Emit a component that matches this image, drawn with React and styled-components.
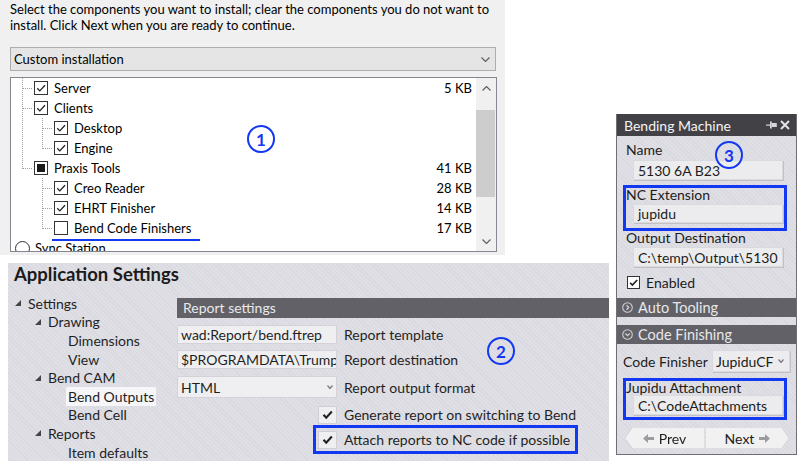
import React from 'react';
import styled, { createGlobalStyle } from 'styled-components';

const FONT = `Lato, "Open Sans", "Liberation Sans", sans-serif`;
const BLUE = '#1238f2';
const HATCH = 'repeating-linear-gradient(45deg, #dfdfe5 0 2px, #d8d8df 2px 3px)';

const GlobalStyle = createGlobalStyle`
  html, body { margin: 0; padding: 0; background: #fff; }
  body { font-family: ${FONT}; color: #000; overflow: hidden; }
  * { box-sizing: border-box; }
`;

const Page = styled.div`
  display: flex;
  align-items: flex-start;
  width: 803px;
  height: 461px;
  overflow: hidden;
`;

const LeftColumn = styled.div`
  display: flex;
  flex-direction: column;
  width: 609px;
  flex-shrink: 0;
`;

const Badge = styled.span`
  position: absolute;
  left: ${p => p.$x}px;
  top: ${p => p.$y}px;
  width: 28px;
  height: 28px;
  border: 2.5px solid ${BLUE};
  border-radius: 50%;
  display: flex;
  align-items: center;
  justify-content: center;
  color: ${BLUE};
  font: 700 17px ${FONT};
`;

/* ---------- installer ---------- */

const Installer = styled.section`
  width: 505px;
  height: 255px;
  background: #f0f0f0;
  padding: 1px 0 0 10px;
  font-size: 13px;
`;

const Intro = styled.p`
  margin: 0;
  line-height: 16px;
  white-space: nowrap;
`;

const Combo = styled.div`
  margin-top: 14px;
  width: 486px;
  height: 24px;
  border: 1px solid #adadad;
  background: #e5e5e5;
  display: flex;
  align-items: center;
  justify-content: space-between;
  padding: 0 5px 0 3px;
`;

const ListBox = styled.div`
  position: relative;
  margin-top: 6px;
  width: 487px;
  height: 175px;
  border: 1px solid #828790;
  background: #fff;
  display: flex;
  overflow: hidden;
`;

const TreeArea = styled.div`
  flex: 1;
  display: flex;
  flex-direction: column;
`;

const TreeRow = styled.div`
  height: 20px;
  flex-shrink: 0;
  display: flex;
  align-items: center;
`;

const Guide = styled.svg`
  display: block;
  flex-shrink: 0;
`;

const Box = styled.span`
  width: 14px;
  height: 14px;
  border: 1px solid #333;
  background: #fff;
  display: flex;
  align-items: center;
  justify-content: center;
  flex-shrink: 0;
  margin-right: 6px;
`;

const Mixed = styled.span`
  width: 8px;
  height: 8px;
  background: #1a1a1a;
`;

const Item = styled.span`
  position: relative;
  display: flex;
  align-items: center;
  white-space: nowrap;

  &::after {
    content: '';
    display: ${p => (p.$marked ? 'block' : 'none')};
    position: absolute;
    left: -2px;
    bottom: -5px;
    width: 148px;
    height: 2px;
    background: ${BLUE};
  }
`;

const Size = styled.span`
  margin-left: auto;
  padding-right: 4px;
  white-space: nowrap;
`;

const Radio = styled.span`
  width: 15px;
  height: 15px;
  border: 1px solid #333;
  border-radius: 50%;
  margin: 0 5px 0 4px;
  flex-shrink: 0;
`;

const ScrollBar = styled.div`
  width: 20px;
  background: #f0f0f0;
  display: flex;
  flex-direction: column;
`;

const ScrollArrow = styled.div`
  height: 20px;
  display: flex;
  align-items: center;
  justify-content: center;
`;

const ScrollTrack = styled.div`
  flex: 1;
  padding: 12px 1px 0 0;
`;

const Thumb = styled.div`
  height: 87px;
  background: #cdcdcd;
`;

/* ---------- application settings ---------- */

const SettingsPane = styled.section`
  position: relative;
  margin: 8px 0 0 8px;
  width: 601px;
  height: 198px;
  background: ${HATCH};
  color: #1f1f1f;
  overflow: hidden;
`;

const Heading = styled.h1`
  margin: 0;
  padding-left: 6px;
  font: 700 18.5px/22px ${FONT};
  color: #1b1b1b;
`;

const SettingsBody = styled.div`
  display: flex;
  margin-top: 9px;
`;

const NavTree = styled.div`
  width: 169px;
  flex-shrink: 0;
  display: flex;
  flex-direction: column;
  font-size: 14px;
`;

const NavItem = styled.div`
  height: 18.6px;
  display: flex;
  align-items: center;
  padding-left: ${p => 7 + p.$level * 20}px;
  white-space: nowrap;
`;

const Expander = styled.svg`
  display: block;
  width: 6px;
  height: 6px;
  margin-right: 7px;
  flex-shrink: 0;
`;

const Spacer = styled.span`
  width: 13px;
  flex-shrink: 0;
`;

const NavLabel = styled.span`
  padding: 0 2px;
  margin-left: -2px;
  line-height: 19px;
  background: ${p => (p.$active ? '#f6f6f8' : 'transparent')};
`;

const ReportColumn = styled.div`
  flex: 1;
  padding-top: 4px;
  display: flex;
  flex-direction: column;
  font-size: 14px;
`;

const SectionBar = styled.div`
  height: 20px;
  background: #616167;
  color: #e9e9ec;
  padding-left: 6px;
  line-height: 20px;
  font-size: 14px;
`;

const FieldRow = styled.div`
  display: flex;
  align-items: center;
  margin-top: ${p => p.$gap}px;
  height: ${p => p.$h}px;
`;

const TextBox = styled.div`
  width: 160px;
  height: 100%;
  flex-shrink: 0;
  background: #efeff1;
  border: 1px solid #d2d2d8;
  padding: 0 3px;
  display: flex;
  align-items: center;
  justify-content: space-between;
  overflow: hidden;
  white-space: nowrap;
`;

const FieldLabel = styled.span`
  margin-left: 7px;
  white-space: nowrap;
`;

const CheckRow = styled.div`
  display: flex;
  align-items: center;
  height: 19px;
  margin: ${p => p.$gap}px 0 0 ${p => p.$indent}px;
`;

const FlatCheck = styled.span`
  width: 19px;
  height: 18px;
  flex-shrink: 0;
  background: #efeff1;
  border: 1px solid #cfcfd5;
  display: flex;
  align-items: center;
  justify-content: center;
`;

const Callout = styled.div`
  border: 3px solid ${BLUE};
  align-self: flex-start;
  padding: ${p => p.$pad};
  margin: ${p => p.$margin};
`;

/* ---------- bending machine ---------- */

const MachinePanel = styled.aside`
  position: relative;
  margin: 114px 0 0 7px;
  width: 181px;
  height: 341px;
  border: 1px solid #6e6e74;
  border-top: 0;
  display: flex;
  flex-direction: column;
  font-size: 14px;
  color: #1c1c1c;
`;

const TitleBar = styled.div`
  height: 22px;
  background: #414146;
  color: #f4f4f4;
  display: flex;
  align-items: center;
  justify-content: space-between;
  padding: 0 6px 0 7px;
  font-size: 14px;
  flex-shrink: 0;
`;

const TitleIcons = styled.span`
  display: flex;
  align-items: center;
  gap: 3px;
`;

const PanelBody = styled.div`
  flex: 1;
  background: ${HATCH};
  display: flex;
  flex-direction: column;
  padding-top: 7px;
`;

const FieldStack = styled.div`
  display: flex;
  flex-direction: column;
  padding: 0 9px 0 6px;
`;

const Field = styled.div`
  padding-left: ${p => p.$inset}px;
`;

const Label = styled.div`
  line-height: ${p => p.$lh || 14}px;
  white-space: nowrap;
`;

const ValueBox = styled.div`
  margin: ${p => p.$gap}px 0 0 7px;
  width: 150px;
  height: ${p => p.$h}px;
  background: #ececee;
  border: 1px solid #dadade;
  box-shadow: 1px 1px 0 #c2c2c6;
  padding-left: 4px;
  display: flex;
  align-items: center;
  white-space: nowrap;
  overflow: hidden;
`;

const PanelCallout = styled.div`
  border: 3px solid ${BLUE};
  margin-top: ${p => p.$gap}px;
  padding: 0 0 ${p => p.$bottom}px 0;
`;

const EnabledRow = styled.div`
  display: flex;
  align-items: center;
  height: 16px;
  margin-top: 7px;
  padding-left: 4px;
  gap: 6px;
`;

const SmallBox = styled.span`
  width: 13px;
  height: 13px;
  border: 1px solid #333;
  background: #fff;
  display: flex;
  align-items: center;
  justify-content: center;
`;

const GroupBar = styled.div`
  height: 19px;
  margin-top: 8px;
  background: #616167;
  color: #e8e8ea;
  display: flex;
  align-items: center;
  padding-left: 5px;
  gap: 5px;
  font-size: 14.5px;
`;

const PickRow = styled.div`
  display: flex;
  align-items: center;
  justify-content: space-between;
  height: 22px;
  margin-top: 6px;
`;

const PickBox = styled.div`
  width: 78px;
  height: 22px;
  margin-right: -3px;
  background: #ececee;
  border: 1px solid #dadade;
  box-shadow: 1px 1px 0 #c2c2c6;
  padding: 0 5px 0 3px;
  display: flex;
  align-items: center;
  justify-content: space-between;
`;

const NavButtons = styled.div`
  display: flex;
  gap: 2px;
  height: 20px;
  margin: 8px 7px 0 8px;
  filter: drop-shadow(0 0 0.6px #8a8a8e);
`;

const NavButton = styled.div`
  flex: ${p => p.$grow};
  background: #f1f1f2;
  display: flex;
  align-items: center;
  justify-content: center;
  gap: 5px;
  clip-path: ${p =>
    p.$side === 'left'
      ? 'polygon(7px 0, 100% 0, 100% 100%, 7px 100%, 0 50%)'
      : 'polygon(0 0, calc(100% - 7px) 0, 100% 50%, calc(100% - 7px) 100%, 0 100%)'};
`;

/* ---------- drawings ---------- */

const Tick = ({ size = 12, width = 1.3 }) => (
  <svg width={size} height={size} viewBox="0 0 12 12">
    <polyline points="2.3,6.3 4.8,8.9 10,3.2" fill="none" stroke="#222" strokeWidth={width} />
  </svg>
);

const Chevron = ({ w = 9, h = 5, color = '#606060', up = false }) => (
  <svg width={w} height={h} viewBox={`0 0 ${w} ${h}`}>
    <polyline
      points={up ? `0.5,${h - 0.5} ${w / 2},0.5 ${w - 0.5},${h - 0.5}` : `0.5,0.5 ${w / 2},${h - 0.5} ${w - 0.5},0.5`}
      fill="none"
      stroke={color}
      strokeWidth="1.2"
    />
  </svg>
);

const TreeGuide = ({ level, trunk, branch }) => {
  const w = level === 1 ? 23 : 43;
  const dot = { stroke: '#a0a0a0', strokeWidth: 1, strokeDasharray: '1 1', shapeRendering: 'crispEdges' };
  const stem = level === 1 ? 11.5 : 31.5;
  return (
    <Guide width={w} height="20" viewBox={`0 0 ${w} 20`}>
      {trunk && <line x1="11.5" y1="0" x2="11.5" y2={trunk === 'half' ? 10.5 : 20} {...dot} />}
      {branch && <line x1="31.5" y1="0" x2="31.5" y2={branch === 'half' ? 10.5 : 20} {...dot} />}
      <line x1={stem} y1="10.5" x2={w - 1} y2="10.5" {...dot} />
    </Guide>
  );
};

const Triangle = () => (
  <Expander viewBox="0 0 6 6">
    <polygon points="6,0 6,6 0,6" fill="#444" />
  </Expander>
);

const Pin = () => (
  <svg width="11" height="8" viewBox="0 0 11 8">
    <rect x="0" y="3.5" width="4" height="1.2" fill="#d6d6d8" />
    <rect x="4" y="0.5" width="1.8" height="7" fill="#d6d6d8" />
    <rect x="5.8" y="2" width="5" height="4" fill="#d6d6d8" />
  </svg>
);

const Close = () => (
  <svg width="10" height="10" viewBox="0 0 10 10">
    <path d="M1 1 L9 9 M9 1 L1 9" stroke="#e4e4e6" strokeWidth="2" />
  </svg>
);

const GroupIcon = ({ open }) => (
  <svg width="11" height="11" viewBox="0 0 11 11">
    <circle cx="5.5" cy="5.5" r="4.8" fill="none" stroke="#cfcfd2" strokeWidth="1.1" />
    <polyline
      points={open ? '3.3,4.5 5.5,6.7 7.7,4.5' : '4.5,3.3 6.7,5.5 4.5,7.7'}
      fill="none"
      stroke="#cfcfd2"
      strokeWidth="1.3"
    />
  </svg>
);

const Arrow = ({ dir }) => (
  <svg width="11" height="9" viewBox="0 0 11 9">
    <polygon
      points={dir === 'left' ? '0,4.5 5,0 5,3 11,3 11,6 5,6 5,9' : '11,4.5 6,0 6,3 0,3 0,6 6,6 6,9'}
      fill="#9c9ca0"
    />
  </svg>
);

/* ---------- data ---------- */

const components = [
  { level: 1, label: 'Server', size: '5 KB', state: 'on', trunk: 'full' },
  { level: 1, label: 'Clients', state: 'on', trunk: 'full' },
  { level: 2, label: 'Desktop', state: 'on', trunk: 'full', branch: 'full' },
  { level: 2, label: 'Engine', state: 'on', trunk: 'full', branch: 'half' },
  { level: 1, label: 'Praxis Tools', size: '41 KB', state: 'mixed', trunk: 'half' },
  { level: 2, label: 'Creo Reader', size: '28 KB', state: 'on', branch: 'full' },
  { level: 2, label: 'EHRT Finisher', size: '14 KB', state: 'on', branch: 'full' },
  { level: 2, label: 'Bend Code Finishers', size: '17 KB', state: 'off', branch: 'half', marked: true },
];

const navItems = [
  { level: 0, label: 'Settings', folder: true },
  { level: 1, label: 'Drawing', folder: true },
  { level: 2, label: 'Dimensions' },
  { level: 2, label: 'View' },
  { level: 1, label: 'Bend CAM', folder: true },
  { level: 2, label: 'Bend Outputs', active: true },
  { level: 2, label: 'Bend Cell' },
  { level: 1, label: 'Reports', folder: true },
  { level: 2, label: 'Item defaults' },
];

function ComponentTree() {
  return (
    <ListBox>
      <TreeArea>
        {components.map(c => (
          <TreeRow key={c.label}>
            <TreeGuide level={c.level} trunk={c.trunk} branch={c.branch} />
            <Item $marked={c.marked}>
              <Box>
                {c.state === 'on' && <Tick />}
                {c.state === 'mixed' && <Mixed />}
              </Box>
              {c.label}
            </Item>
            {c.size && <Size>{c.size}</Size>}
          </TreeRow>
        ))}
        <TreeRow>
          <Radio />
          Sync Station
        </TreeRow>
      </TreeArea>
      <ScrollBar>
        <ScrollArrow>
          <Chevron up />
        </ScrollArrow>
        <ScrollTrack>
          <Thumb />
        </ScrollTrack>
        <ScrollArrow>
          <Chevron />
        </ScrollArrow>
      </ScrollBar>
      <Badge $x={236} $y={47}>1</Badge>
    </ListBox>
  );
}

function AppSettings() {
  return (
    <SettingsPane>
      <Heading>Application Settings</Heading>
      <SettingsBody>
        <NavTree>
          {navItems.map(n => (
            <NavItem key={n.label} $level={n.level}>
              {n.folder ? <Triangle /> : <Spacer />}
              <NavLabel $active={n.active}>{n.label}</NavLabel>
            </NavItem>
          ))}
        </NavTree>
        <ReportColumn>
          <SectionBar>Report settings</SectionBar>
          <FieldRow $gap={7} $h={19}>
            <TextBox>wad:Report/bend.ftrep</TextBox>
            <FieldLabel>Report template</FieldLabel>
          </FieldRow>
          <FieldRow $gap={6} $h={19}>
            <TextBox>$PROGRAMDATA\Trumpf</TextBox>
            <FieldLabel>Report destination</FieldLabel>
          </FieldRow>
          <FieldRow $gap={7} $h={22}>
            <TextBox>
              HTML
              <Chevron w={6} h={4} color="#7a7a7e" />
            </TextBox>
            <FieldLabel>Report output format</FieldLabel>
          </FieldRow>
          <CheckRow $gap={7} $indent={141}>
            <FlatCheck>
              <Tick size={13} width={2} />
            </FlatCheck>
            <FieldLabel>Generate report on switching to Bend</FieldLabel>
          </CheckRow>
          <Callout $pad="2px 5px 2px 2px" $margin="1px 0 0 136px">
            <CheckRow $gap={0} $indent={0}>
              <FlatCheck>
                <Tick size={13} width={2} />
              </FlatCheck>
              <FieldLabel>Attach reports to NC code if possible</FieldLabel>
            </CheckRow>
          </Callout>
        </ReportColumn>
      </SettingsBody>
      <Badge $x={479} $y={74}>2</Badge>
    </SettingsPane>
  );
}

function BendingMachine() {
  return (
    <MachinePanel>
      <TitleBar>
        Bending Machine
        <TitleIcons>
          <Pin />
          <Close />
        </TitleIcons>
      </TitleBar>
      <PanelBody>
        <FieldStack>
          <Field $inset={3}>
            <Label>Name</Label>
            <ValueBox $gap={3} $h={20}>5130 6A B23</ValueBox>
          </Field>
          <PanelCallout $gap={5} $bottom={5}>
            <Label>NC Extension</Label>
            <ValueBox $gap={2} $h={19}>jupidu</ValueBox>
          </PanelCallout>
          <Field $inset={3}>
            <Label>Output Destination</Label>
            <ValueBox $gap={2} $h={20}>C:\temp\Output\5130</ValueBox>
          </Field>
          <EnabledRow>
            <SmallBox>
              <Tick size={11} width={1.8} />
            </SmallBox>
            Enabled
          </EnabledRow>
        </FieldStack>
        <GroupBar>
          <GroupIcon />
          Auto Tooling
        </GroupBar>
        <GroupBar>
          <GroupIcon open />
          Code Finishing
        </GroupBar>
        <FieldStack>
          <PickRow>
            Code Finisher
            <PickBox>
              JupiduCF
              <Chevron w={6} h={4} color="#7a7a7e" />
            </PickBox>
          </PickRow>
          <PanelCallout $gap={6} $bottom={2}>
            <Label $lh={13}>Jupidu Attachment</Label>
            <ValueBox $gap={1} $h={20}>C:\CodeAttachments</ValueBox>
          </PanelCallout>
        </FieldStack>
        <NavButtons>
          <NavButton $side="left" $grow={79}>
            <Arrow dir="left" />
            Prev
          </NavButton>
          <NavButton $side="right" $grow={83}>
            Next
            <Arrow dir="right" />
          </NavButton>
        </NavButtons>
      </PanelBody>
      <Badge $x={98} $y={27}>3</Badge>
    </MachinePanel>
  );
}

export default function App() {
  return (
    <Page>
      <GlobalStyle />
      <LeftColumn>
        <Installer>
          <Intro>
            Select the components you want to install; clear the components you do not want to
            <br />
            install. Click Next when you are ready to continue.
          </Intro>
          <Combo>
            Custom installation
            <Chevron />
          </Combo>
          <ComponentTree />
        </Installer>
        <AppSettings />
      </LeftColumn>
      <BendingMachine />
    </Page>
  );
}
